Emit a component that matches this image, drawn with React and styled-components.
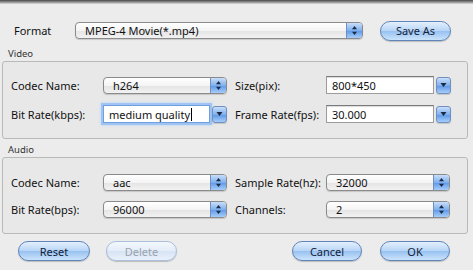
import styled, { createGlobalStyle } from "styled-components";

const GlobalStyle = createGlobalStyle`
  html, body {
    margin: 0;
    padding: 0;
    background: #ececec;
  }
  body {
    font-family: "Noto Sans", "DejaVu Sans", sans-serif;
    color: #111;
  }
`;

const Window = styled.div`
  width: 473px;
  height: 270px;
  background: #ececec;
  overflow: hidden;
  display: flex;
  flex-direction: column;
`;

const TopEdge = styled.div`
  height: 4px;
  background: linear-gradient(#4a4a4a, #8c8c8c 50%, #dcdcdc);
`;

const FormatRow = styled.div`
  display: flex;
  align-items: center;
  margin-top: 17px;
  padding-left: 14px;
  height: 19px;
`;

const FormatLabel = styled.span`
  width: 61px;
  font-size: 11px;
`;

const SectionTitle = styled.div`
  font-size: 9.5px;
  color: #333;
  padding-left: 8px;
  margin-top: ${(p) => p.$top}px;
  height: 12px;
  line-height: 12px;
`;

const Group = styled.div`
  margin: ${(p) => p.$gap}px 5px 0 2px;
  border: 1px solid #b9b9b9;
  border-radius: 3px;
  background: #e8e8e8;
  padding: ${(p) => p.$padTop}px 0 15px 8px;
  display: grid;
  grid-template-columns: 92px 124px 99px 125px;
  row-gap: ${(p) => p.$rowGap}px;
  align-items: center;
`;

const Label = styled.span`
  font-size: 11px;
  padding-left: ${(p) => (p.$second ? 8 : 0)}px;
  white-space: nowrap;
`;

const Popup = styled.div`
  position: relative;
  width: ${(p) => p.$width}px;
  height: 17px;
  box-sizing: border-box;
  border: 1px solid #8a8a8a;
  border-radius: 4px;
  background: linear-gradient(#ffffff, #f4f4f4 50%, #e4e4e4 51%, #f2f2f2);
  box-shadow: 0 1px 1px rgba(0, 0, 0, 0.15);
  display: flex;
  align-items: center;
  font-size: 11px;
  padding-left: 9px;
`;

const PopupArrows = styled.div`
  position: absolute;
  right: 0;
  top: 0;
  bottom: 0;
  width: 15px;
  border-left: 1px solid #6f8fbf;
  border-radius: 0 3px 3px 0;
  background: linear-gradient(#c9defa, #7fb0ee 50%, #5c97e8 51%, #a7cdf8);
  display: flex;
  align-items: center;
  justify-content: center;
`;

const Combo = styled.div`
  display: flex;
  align-items: center;
  width: ${(p) => p.$width}px;
  height: 18px;
`;

const ComboField = styled.div`
  flex: 1;
  height: 18px;
  box-sizing: border-box;
  background: #fff;
  border: 1px solid ${(p) => (p.$focus ? "#6e9fe0" : "#9c9c9c")};
  border-top-color: ${(p) => (p.$focus ? "#6e9fe0" : "#7a7a7a")};
  box-shadow: ${(p) =>
    p.$focus ? "0 0 0 2px #9fc3f2, 0 0 3px 2px #b8d4f7" : "inset 0 1px 1px rgba(0,0,0,0.15)"};
  font-size: 11px;
  padding-left: 5px;
  display: flex;
  align-items: center;
`;

const Caret = styled.span`
  display: inline-block;
  width: 1px;
  height: 13px;
  background: #000;
  margin-left: 1px;
`;

const ComboButton = styled.div`
  width: 15px;
  height: 17px;
  margin-left: 2px;
  box-sizing: border-box;
  border: 1px solid #6f8fbf;
  border-radius: 3px;
  background: linear-gradient(#c9defa, #7fb0ee 50%, #5c97e8 51%, #a7cdf8);
  display: flex;
  align-items: center;
  justify-content: center;
  box-shadow: 0 1px 1px rgba(0, 0, 0, 0.15);
`;

const Buttons = styled.div`
  display: flex;
  align-items: center;
  margin-top: 7px;
  padding-left: 18px;
`;

const AquaButton = styled.button`
  width: ${(p) => p.$width}px;
  height: 20px;
  margin-left: ${(p) => p.$gap || 0}px;
  border-radius: 10px;
  border: 1px solid ${(p) => (p.disabled ? "#a9bfdc" : "#5f85bb")};
  background: ${(p) =>
    p.disabled
      ? "linear-gradient(#f4f8fd, #e3ecf8 50%, #d6e3f4 51%, #eaf1fb)"
      : "linear-gradient(#e4f0fd, #b6d4f6 50%, #97c1f1 51%, #cbe3fb)"};
  box-shadow: 0 1px 1px rgba(0, 0, 0, 0.2);
  font-family: "Noto Sans", "DejaVu Sans", sans-serif;
  font-size: 11px;
  color: ${(p) => (p.disabled ? "#9aa3ad" : "#14233a")};
  padding: 0;
  cursor: default;
`;

const Spacer = styled.div`
  flex: 1;
`;

const EndGap = styled.div`
  width: 23px;
`;

const UpDown = () => (
  <svg width="7" height="11" viewBox="0 0 7 11">
    <path d="M3.5 1 L6 4.2 L1 4.2 Z" fill="#1d2a44" />
    <path d="M3.5 10 L6 6.8 L1 6.8 Z" fill="#1d2a44" />
  </svg>
);

const Down = () => (
  <svg width="7" height="6" viewBox="0 0 7 6">
    <path d="M0.5 1 L6.5 1 L3.5 5 Z" fill="#1d2a44" />
  </svg>
);

const Select = ({ value, width }) => (
  <Popup $width={width}>
    {value}
    <PopupArrows>
      <UpDown />
    </PopupArrows>
  </Popup>
);

const ComboBox = ({ value, width, focus }) => (
  <Combo $width={width}>
    <ComboField $focus={focus}>
      {value}
      {focus && <Caret />}
    </ComboField>
    <ComboButton>
      <Down />
    </ComboButton>
  </Combo>
);

export default function App() {
  return (
    <Window>
      <GlobalStyle />
      <TopEdge />
      <FormatRow>
        <FormatLabel>Format</FormatLabel>
        <Select value="MPEG-4 Movie(*.mp4)" width={288} />
        <AquaButton $width={71} $gap={17}>
          Save As
        </AquaButton>
      </FormatRow>

      <SectionTitle $top={8}>Video</SectionTitle>
      <Group $gap={1} $padTop={14} $rowGap={11}>
        <Label>Codec Name:</Label>
        <Select value="h264" width={124} />
        <Label $second>Size(pix):</Label>
        <ComboBox value="800*450" width={125} />
        <Label>Bit Rate(kbps):</Label>
        <ComboBox value="medium quality" width={124} focus />
        <Label $second>Frame Rate(fps):</Label>
        <ComboBox value="30.000" width={125} />
      </Group>

      <SectionTitle $top={5}>Audio</SectionTitle>
      <Group $gap={1} $padTop={16} $rowGap={10}>
        <Label>Codec Name:</Label>
        <Select value="aac" width={124} />
        <Label $second>Sample Rate(hz):</Label>
        <Select value="32000" width={124} />
        <Label>Bit Rate(bps):</Label>
        <Select value="96000" width={124} />
        <Label $second>Channels:</Label>
        <Select value="2" width={124} />
      </Group>

      <Buttons>
        <AquaButton $width={72}>Reset</AquaButton>
        <AquaButton $width={71} $gap={16} disabled>
          Delete
        </AquaButton>
        <Spacer />
        <AquaButton $width={70}>Cancel</AquaButton>
        <AquaButton $width={70} $gap={18}>
          OK
        </AquaButton>
        <EndGap />
      </Buttons>
    </Window>
  );
}
